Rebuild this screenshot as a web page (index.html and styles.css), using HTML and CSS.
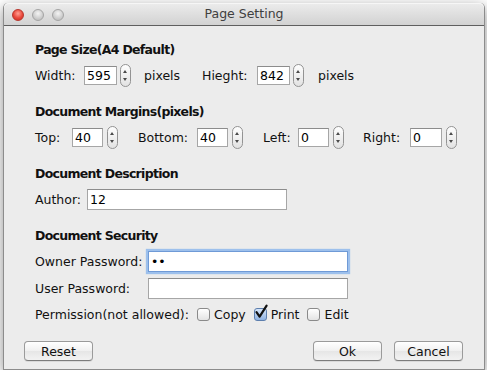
FILE: index.html
```html
<!DOCTYPE html>
<html>
<head>
	<title>Page Setting</title>
	<meta charset="utf-8">
	<link rel="stylesheet" href="styles.css">
</head>
<body>

	<div class="window">

		<div class="titlebar">
			<div class="lights">
				<span class="light red"></span>
				<span class="light"></span>
				<span class="light"></span>
			</div>
			<div class="title">Page Setting</div>
		</div>

		<div class="content">

			<div class="section">
				<h2>Page Size(A4 Default)</h2>
				<div class="row row-size">
					<span>Width:</span>
					<input type="text" class="field" value="595">
					<span class="spin"></span>
					<span>pixels</span>
					<span>Hieght:</span>
					<input type="text" class="field" value="842">
					<span class="spin"></span>
					<span>pixels</span>
				</div>
			</div>

			<div class="section">
				<h2>Document Margins(pixels)</h2>
				<div class="row row-margins">
					<span>Top:</span>
					<input type="text" class="field short" value="40">
					<span class="spin"></span>
					<span>Bottom:</span>
					<input type="text" class="field short" value="40">
					<span class="spin"></span>
					<span>Left:</span>
					<input type="text" class="field short" value="0">
					<span class="spin"></span>
					<span>Right:</span>
					<input type="text" class="field short" value="0">
					<span class="spin"></span>
				</div>
			</div>

			<div class="section">
				<h2>Document Description</h2>
				<div class="row">
					<span class="lbl-author">Author:</span>
					<input type="text" class="field wide" value="12">
				</div>
			</div>

			<div class="section">
				<h2>Document Security</h2>
				<div class="row">
					<span class="lbl-pass">Owner Password:</span>
					<input type="password" class="field wide focus" value="12">
				</div>
				<div class="row user-row">
					<span class="lbl-pass">User Password:</span>
					<input type="password" class="field wide" value="">
				</div>
				<div class="row perm-row">
					<span class="lbl-perm">Permission(not allowed):</span>
					<label class="check"><span class="box"></span>Copy</label>
					<label class="check"><span class="box checked"><svg width="16" height="16" viewBox="0 0 16 16"><path d="M3.5 8.2 L6.6 12.6 L13.6 1.6" fill="none" stroke="#111" stroke-width="2.2" stroke-linecap="round" stroke-linejoin="round"/></svg></span>Print</label>
					<label class="check"><span class="box"></span>Edit</label>
				</div>
			</div>

		</div>

		<div class="footer">
			<button>Reset</button>
			<div class="footer-right">
				<button>Ok</button>
				<button>Cancel</button>
			</div>
		</div>

	</div>

</body>
</html>
```

FILE: styles.css
```css
* {
	margin: 0;
	padding: 0;
}

html {
	background-color: #ffffff;
}

body {
	font-family: "DejaVu Sans", sans-serif;
	font-size: 12.5px;
	color: #111;
}

.window {
	width: 482px;
	margin: 3px 0 0 3px;
	box-sizing: border-box;
	border: 1px solid #8c8c8c;
	border-top: none;
	border-radius: 5px 5px 0 0;
	background-color: #ececec;
	box-shadow: 0 4px 14px rgba(0, 0, 0, 0.45);
}

	.titlebar {
		display: flex;
		align-items: center;
		height: 22px;
		border-bottom: 1px solid #5f5f5f;
		border-radius: 5px 5px 0 0;
		background: linear-gradient(#ececec, #d2d2d2);
		box-shadow: inset 0 1px 0 #f6f6f6;
	}

		.lights {
			display: flex;
			gap: 8px;
			width: 60px;
			padding-left: 8px;
			padding-top: 1px;
		}

			.light {
				width: 12px;
				height: 12px;
				box-sizing: border-box;
				border-radius: 50%;
				border: 1px solid #a4a4a4;
				background: radial-gradient(circle at 50% 35%, #f4f4f4, #c6c6c6 70%);
			}

			.light.red {
				border-color: #b8352c;
				background: radial-gradient(circle at 50% 35%, #ff9f93, #e9483b 55%, #c72c22);
			}

		.title {
			flex: 1;
			text-align: center;
			margin-right: 68px;
			color: #404040;
			font-size: 12.5px;
			line-height: 22px;
		}

	.content {
		padding: 16px 0 0 31px;
	}

		.section {
			margin-bottom: 17px;
		}

		.section:last-child {
			margin-bottom: 0;
		}

			h2 {
				font-size: 12.5px;
				font-weight: bold;
				letter-spacing: -0.7px;
				line-height: 16px;
				margin-bottom: 6px;
			}

			.row {
				display: flex;
				align-items: center;
				height: 23px;
				line-height: 23px;
			}

			.row-size {
				display: grid;
				grid-template-columns: 49px 33px 27px 58px 55px 33px 28px auto;
			}

			.row-margins {
				display: grid;
				grid-template-columns: 37px 31px 35px 59px 31px 35px 35px 31px 34px 47px 32px auto;
			}

			.user-row {
				margin-top: 4px;
			}

			.perm-row {
				margin-top: 3px;
			}

				.field {
					width: 33px;
					height: 19px;
					box-sizing: border-box;
					border: 1px solid #a6a6a6;
					border-top-color: #8c8c8c;
					background-color: #fff;
					padding: 0 2px;
					font-family: "DejaVu Sans", sans-serif;
					font-size: 12.5px;
					color: #000;
					outline: none;
				}

				.field.short {
					width: 31px;
				}

				.field.wide {
					width: 200px;
					height: 21px;
				}

				.row-margins .field:nth-last-child(2) {
					width: 32px;
				}

				.field.focus {
					border-color: #6f9ad6;
					box-shadow: 0 0 1px 2px #9dc0ec;
				}

				.spin {
					position: relative;
					width: 11px;
					height: 23px;
					margin-left: 4px;
					box-sizing: border-box;
					border: 1px solid #939393;
					border-radius: 6px;
					background: linear-gradient(#fefefe, #e2e2e2);
				}

				.row-size .spin {
					margin-left: 3px;
				}

				.spin::before,
				.spin::after {
					content: "";
					position: absolute;
					left: 2px;
					border-left: 2.5px solid transparent;
					border-right: 2.5px solid transparent;
				}

				.spin::before {
					top: 5px;
					border-bottom: 3px solid #4a4a4a;
				}

				.spin::after {
					top: 13px;
					border-top: 3px solid #4a4a4a;
				}

				.lbl-author {
					width: 52px;
				}

				.lbl-pass {
					width: 113px;
				}

				.lbl-perm {
					width: 162px;
				}

				.check {
					display: flex;
					align-items: center;
					margin-right: 8px;
				}

					.box {
						position: relative;
						width: 13px;
						height: 13px;
						margin-right: 4px;
						box-sizing: border-box;
						border: 1px solid #8a8a8a;
						border-radius: 3px;
						background: linear-gradient(#ffffff, #e4e4e4);
					}

					.box.checked {
						border-color: #5d7fae;
						background: linear-gradient(#d6e6fa, #8fb2e2);
					}

						.box svg {
							position: absolute;
							left: -2px;
							top: -5px;
						}

	.footer {
		display: flex;
		justify-content: space-between;
		padding: 15px 21px 8px 20px;
	}

		.footer-right {
			display: flex;
			gap: 12px;
		}

		button {
			width: 69px;
			height: 20px;
			font-family: "DejaVu Sans", sans-serif;
			font-size: 12.5px;
			color: #111;
			border: 1px solid #9a9a9a;
			border-bottom-color: #7c7c7c;
			border-radius: 4px;
			background: linear-gradient(#ffffff, #f0f0f0 50%, #e6e6e6 51%, #f2f2f2);
			box-shadow: 0 1px 0 rgba(0, 0, 0, 0.08);
		}

		button:focus {
			outline: none;
		}
```
